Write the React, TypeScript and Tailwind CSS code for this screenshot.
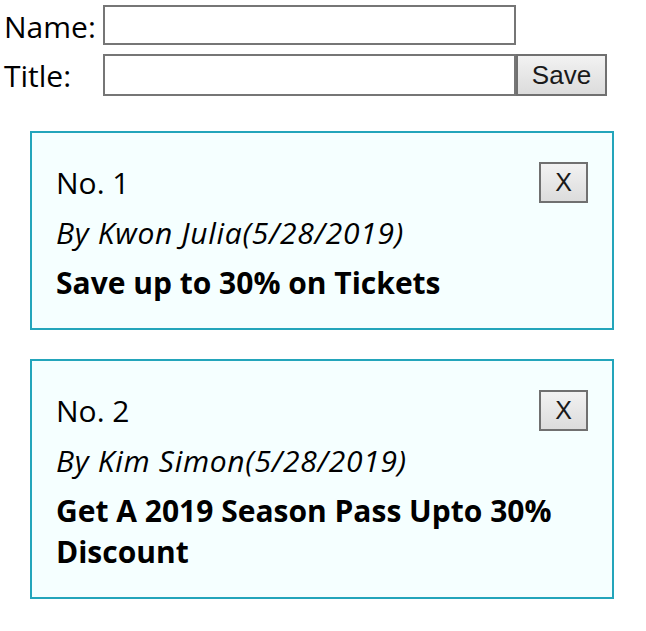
import { useState } from "react";

type Post = { id: number; author: string; date: string; title: string };

const initialPosts: Post[] = [
  { id: 1, author: "Kwon Julia", date: "5/28/2019", title: "Save up to 30% on Tickets" },
  { id: 2, author: "Kim Simon", date: "5/28/2019", title: "Get A 2019 Season Pass Upto 30% Discount" },
];

export default function App() {
  const [posts, setPosts] = useState<Post[]>(initialPosts);
  const [name, setName] = useState("");
  const [title, setTitle] = useState("");

  const save = () => {
    if (!name || !title) return;
    const id = posts.length ? posts[posts.length - 1].id + 1 : 1;
    setPosts([...posts, { id, author: name, date: new Date().toLocaleDateString("en-US"), title }]);
    setName("");
    setTitle("");
  };

  return (
    <div className="min-h-screen bg-white text-black font-['Open_Sans','Noto_Sans',sans-serif]">
      {/* form */}
      <div className="pt-[5px] flex flex-col gap-[9px]">
        <div className="flex h-[40px]">
          <label className="w-[103px] pl-[4px] pt-[3px] text-[30px] leading-[37px]">Name:</label>
          <input
            value={name}
            onChange={(e) => setName(e.target.value)}
            className="w-[413px] h-[40px] border-2 border-[#767676] bg-white px-1 text-[24px] outline-none"
          />
        </div>
        <div className="flex h-[42px]">
          <label className="w-[103px] pl-[4px] pt-[1px] text-[30px] leading-[41px]">Title:</label>
          <input
            value={title}
            onChange={(e) => setTitle(e.target.value)}
            className="w-[413px] h-[42px] border-2 border-[#767676] bg-white px-1 text-[24px] outline-none"
          />
          <button
            onClick={save}
            className="w-[91px] h-[42px] border-2 border-[#707070] bg-gradient-to-b from-[#f2f2f2] to-[#dcdcdc] text-[26px] text-[#1a1a1a] font-['Liberation_Sans',Arial,sans-serif]"
          >
            Save
          </button>
        </div>
      </div>

      {/* posts */}
      <div className="mt-[35px] ml-[30px] w-[584px] flex flex-col gap-[29px]">
        {posts.map((p) => (
          <div key={p.id} className="border-2 border-[#23a5bb] bg-[#f5ffff] pt-[29px] pb-[25px] px-[24px] text-[30px] leading-[41px]">
            <div className="flex justify-between items-start">
              <div>No. {p.id}</div>
              <button
                onClick={() => setPosts(posts.filter((x) => x.id !== p.id))}
                className="w-[49px] h-[41px] border-2 border-[#707070] bg-gradient-to-b from-[#f2f2f2] to-[#dcdcdc] text-[25px] leading-none text-[#1a1a1a] font-['Liberation_Sans',Arial,sans-serif]"
              >
                X
              </button>
            </div>
            <div className="mt-[9px] italic tracking-[0.7px]">
              By {p.author}({p.date})
            </div>
            <div className="mt-[9px] font-bold">{p.title}</div>
          </div>
        ))}
      </div>
    </div>
  );
}
